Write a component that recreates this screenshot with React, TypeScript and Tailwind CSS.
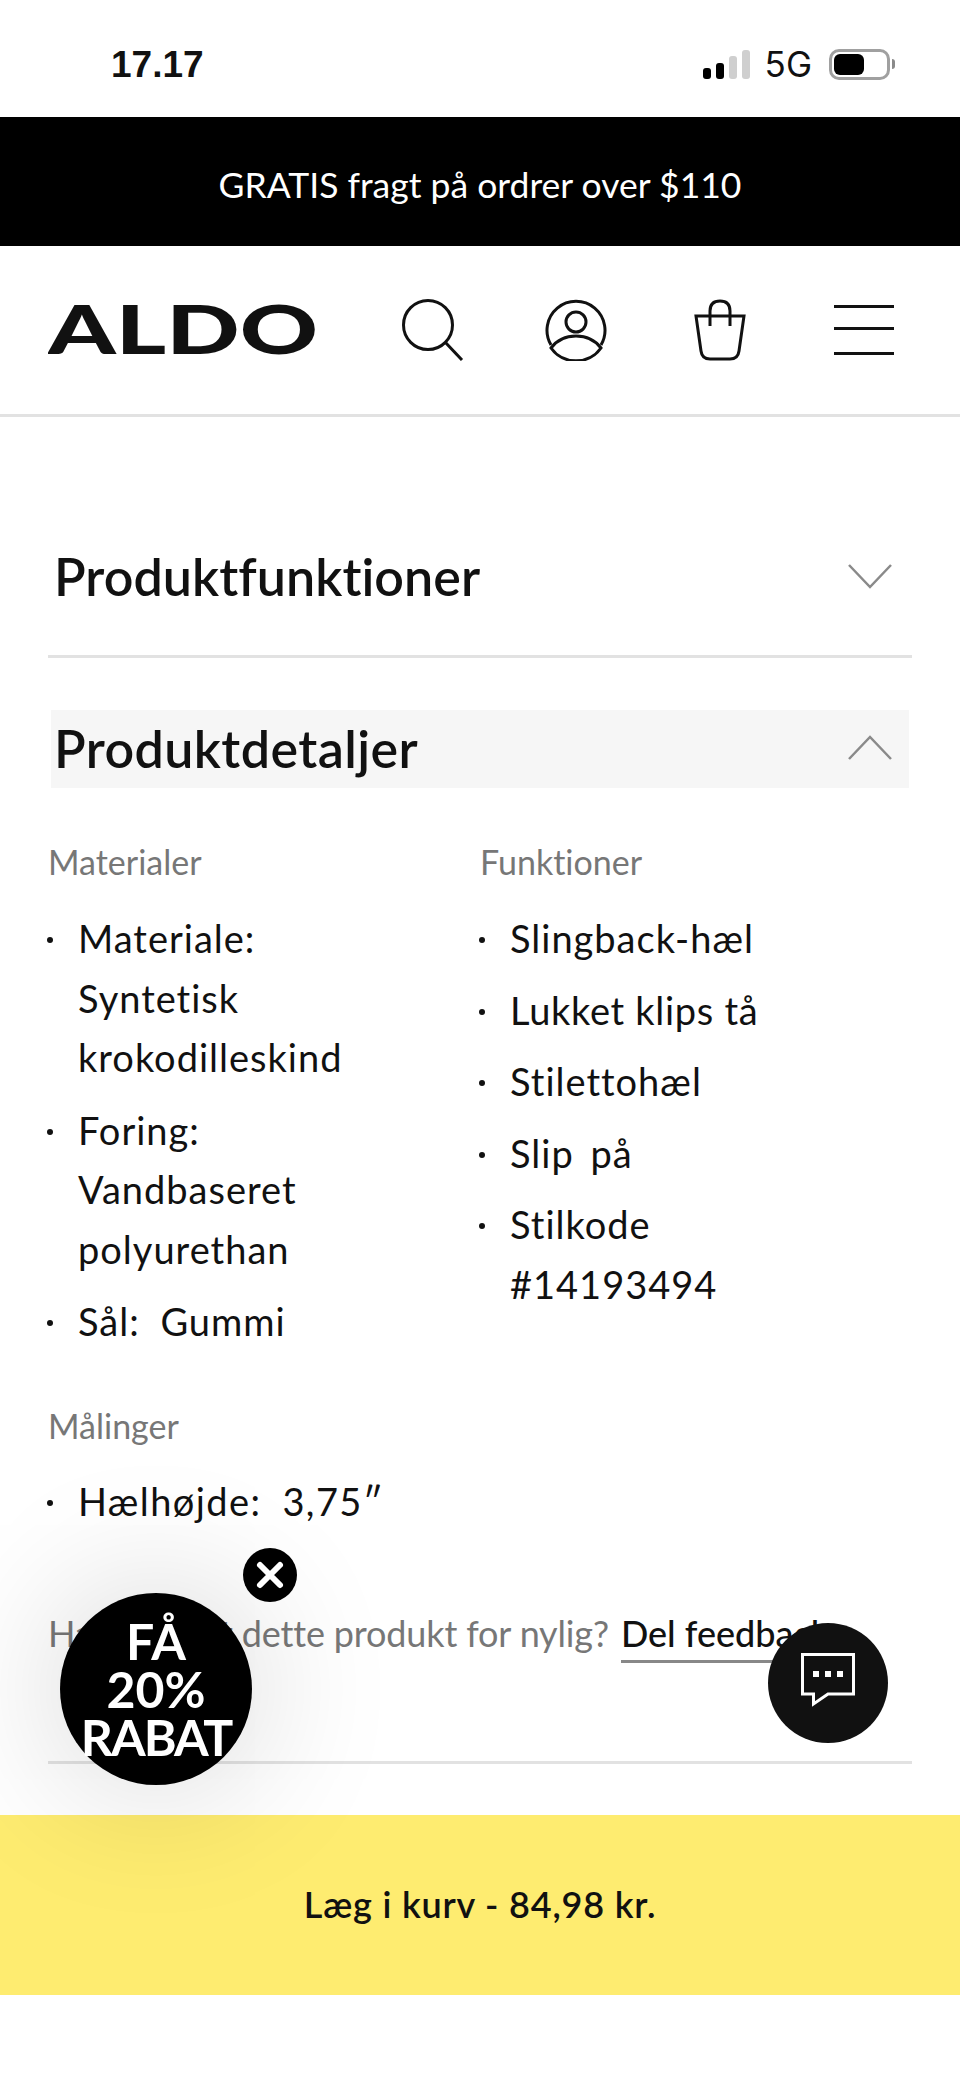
const font = "font-['Lato',sans-serif]"

function Bullet({ children }: { children: React.ReactNode }) {
  return (
    <li className="flex">
      <span className="mt-[28px] mr-[25px] ml-[-1px] h-[6px] w-[6px] shrink-0 rounded-full bg-[#111]" />
      <span>{children}</span>
    </li>
  )
}

function Chevron({ up }: { up?: boolean }) {
  return (
    <svg width="44" height="26" viewBox="0 0 44 26" fill="none" stroke="#8a8a8a" strokeWidth="2.5">
      <path d={up ? 'M1 24L22 2L43 24' : 'M1 2L22 24L43 2'} />
    </svg>
  )
}

export default function App() {
  return (
    <div className={`relative h-[2079px] w-[960px] overflow-hidden bg-white text-[#111] [font-variant-ligatures:none] ${font}`}>
      {/* status bar */}
      <div className="flex h-[117px] items-start justify-between pl-[111px] pr-[65px] pt-[41px]">
        <span className="font-['Liberation_Sans',sans-serif] text-[37px] font-bold leading-[48px]">17.17</span>
        <div className="flex items-center pt-[5px]">
          <div className="flex items-end gap-[5px]">
            <div className="h-[11px] w-[8px] rounded-[3px] bg-black" />
            <div className="h-[16px] w-[8px] rounded-[3px] bg-black" />
            <div className="h-[23px] w-[8px] rounded-[3px] bg-[#cfcfcf]" />
            <div className="h-[29px] w-[8px] rounded-[3px] bg-[#cfcfcf]" />
          </div>
          <span className="ml-[15px] font-['Inter',sans-serif] text-[35px] leading-[36px]">5G</span>
          <div className="ml-[17px] flex items-center gap-[2px]">
            <div className="flex h-[31px] w-[61px] items-center rounded-[10px] border-[3px] border-[#a0a0a0] pl-[2px]">
              <div className="h-[21px] w-[30px] rounded-[6px] bg-black" />
            </div>
            <div className="h-[10px] w-[3px] rounded-r-full bg-[#8a8a8a]" />
          </div>
        </div>
      </div>

      {/* promo */}
      <div className="flex h-[129px] items-center justify-center bg-black pt-[6px] text-[35.5px] text-white">
        GRATIS fragt på ordrer over $110
      </div>

      {/* header */}
      <header className="flex h-[171px] items-center border-b-[3px] border-[#e2e2e2] pl-[48px] pr-[65px]">
        <svg width="270" height="84" viewBox="0 0 270 84" className="shrink-0">
          <text x="0" y="66" textLength="270" lengthAdjust="spacingAndGlyphs" fontFamily="Lato, sans-serif" fontWeight="900" fontSize="66" fill="#111">ALDO</text>
        </svg>
        <svg width="62" height="62" viewBox="0 0 62 62" fill="none" stroke="#111" strokeWidth="3" className="ml-[84px] shrink-0">
          <circle cx="26" cy="26" r="24.5" />
          <path d="M43 43L60 61" />
        </svg>
        <svg width="62" height="62" viewBox="0 0 62 62" fill="none" stroke="#111" strokeWidth="3" className="ml-[81px] shrink-0">
          <path d="M6 46A29 29 0 1 1 56 46" />
          <circle cx="31" cy="23" r="10" />
          <path d="M6 49C18 33 44 33 56 49C44 66 18 66 6 49Z" />
        </svg>
        <svg width="52" height="62" viewBox="0 0 52 62" fill="none" stroke="#111" strokeWidth="3" className="ml-[87px] shrink-0">
          <path d="M2 17H50L45 52Q44 60 36 60H16Q8 60 7 52Z" />
          <path d="M16 27V12Q16 2 26 2Q36 2 36 12V27" />
        </svg>
        <div className="ml-[88px] flex w-[60px] shrink-0 flex-col">
          <div className="h-[3px] bg-[#111]" />
          <div className="mt-[19px] h-[3px] bg-[#111]" />
          <div className="mt-[22px] h-[3px] bg-[#111]" />
        </div>
      </header>

      <main className="px-[48px]">
        {/* closed accordion */}
        <div className="flex h-[241px] items-center justify-between border-b-[3px] border-[#e2e2e2] pl-[6px] pr-[20px] pt-[80px]">
          <h2 className="text-[52px] font-semibold tracking-[0.05px]">Produktfunktioner</h2>
          <Chevron />
        </div>

        {/* open accordion */}
        <div className="mx-[3px] mt-[52px] flex h-[78px] items-center justify-between bg-[#f6f6f6] pb-[2px] pl-[3px] pr-[17px]">
          <h2 className="text-[52px] font-semibold tracking-[0.4px]">Produktdetaljer</h2>
          <Chevron up />
        </div>

        <div className="mt-[49px] grid grid-cols-[432px_1fr] text-[38px] leading-[59.5px] tracking-[1px]">
          <div className="[word-spacing:10px]">
            <h3 className="text-[34px] leading-[50px] tracking-normal text-[#777]">Materialer</h3>
            <ul className="mt-[22px] flex flex-col gap-[13px]">
              <Bullet>Materiale:<br />Syntetisk<br />krokodilleskind</Bullet>
              <Bullet>Foring:<br />Vandbaseret<br />polyurethan</Bullet>
              <Bullet>Sål: Gummi</Bullet>
            </ul>
          </div>
          <div className="[word-spacing:6px]">
            <h3 className="text-[34px] leading-[50px] tracking-normal text-[#777]">Funktioner</h3>
            <ul className="mt-[22px] flex flex-col gap-[12px]">
              <Bullet>Slingback-hæl</Bullet>
              <Bullet><span className="tracking-[0.7px] [word-spacing:0px]">Lukket klips tå</span></Bullet>
              <Bullet>Stilettohæl</Bullet>
              <Bullet>Slip på</Bullet>
              <Bullet>Stilkode<br />#14193494</Bullet>
            </ul>
          </div>
        </div>

        <div className="mt-[49px] text-[38px] leading-[59.5px] tracking-[1.4px] [word-spacing:10px]">
          <h3 className="text-[34px] leading-[50px] tracking-normal text-[#777] [word-spacing:0px]">Målinger</h3>
          <ul className="mt-[21px]">
            <Bullet>Hælhøjde: 3,75″</Bullet>
          </ul>
        </div>

        <div className="mt-[75px] flex h-[158px] items-start gap-[12px] border-b-[3px] border-[#e2e2e2] text-[36px] text-[#777]">
          <span className="tracking-[-0.15px]">Har du købt dette produkt for nylig?</span>
          <span className="border-b-[3px] border-[#888] font-medium text-[#111]">Del feedback</span>
        </div>
      </main>

      {/* add to cart */}
      <div className="absolute left-0 top-[1815px] flex h-[180px] w-full items-center justify-center bg-[#feec70] pb-[2px] text-[36px] font-semibold tracking-[0.8px]">
        Læg i kurv - 84,98 kr.
      </div>

      {/* discount badge */}
      <div className="absolute left-[60px] top-[1593px] flex h-[192px] w-[192px] flex-col items-center justify-center rounded-full bg-black text-center text-[50px] font-bold leading-[48px] text-white shadow-[0_0_150px_rgba(0,0,0,0.18)]">
        <span>FÅ</span>
        <span>20%</span>
        <span className="tracking-[-2px]">RABAT</span>
      </div>
      <div className="absolute left-[243px] top-[1548px] flex h-[54px] w-[54px] items-center justify-center rounded-full bg-black">
        <svg width="30" height="30" viewBox="0 0 30 30" stroke="#fff" strokeWidth="6" strokeLinecap="round">
          <path d="M5 5L25 25M25 5L5 25" />
        </svg>
      </div>

      {/* chat */}
      <div className="absolute left-[768px] top-[1623px] flex h-[120px] w-[120px] items-center justify-center rounded-full bg-[#111]">
        <svg width="54" height="54" viewBox="0 0 54 54" fill="none" stroke="#fff" strokeWidth="3" className="mb-[6px]">
          <path d="M1.5 1.5H52.5V41H27L12.5 51V41H1.5Z" />
          <path d="M12 21H18M24 21H30M36 21H42" strokeWidth="6" />
        </svg>
      </div>
    </div>
  )
}
